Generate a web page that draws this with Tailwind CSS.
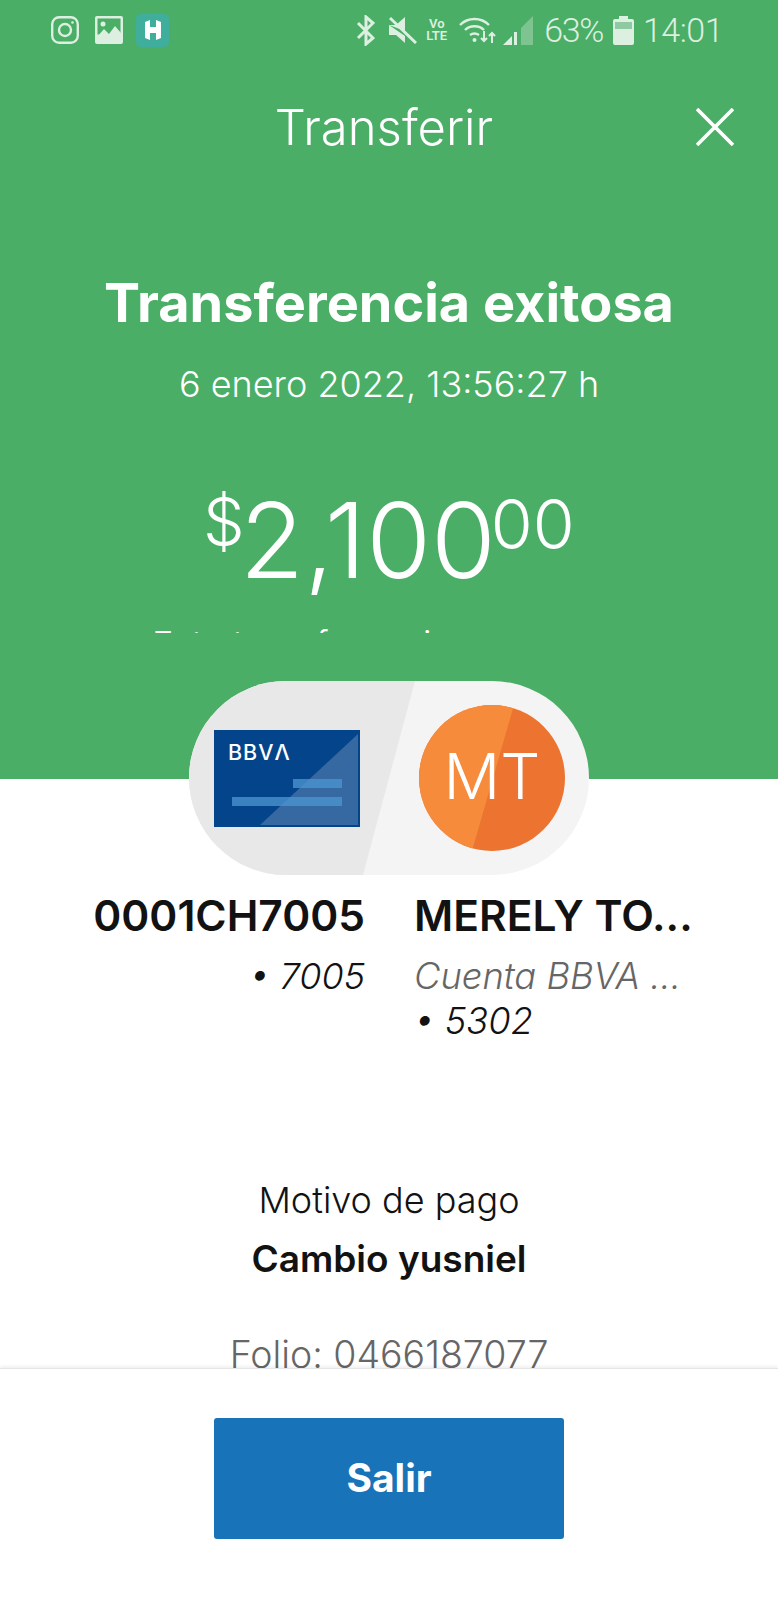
<!DOCTYPE html>
<html><head><meta charset="utf-8"><script src="https://cdn.jsdelivr.net/npm/@tailwindcss/browser@4"></script></head>
<body class="bg-white">
<div class="w-[778px] h-[1600px] flex flex-col overflow-hidden bg-white font-['Inter',sans-serif]">
 <main class="h-[1368px] overflow-hidden shrink-0">
  <section class="h-[779px] bg-[#4aae66]">
   <div class="h-[633px] overflow-hidden flex flex-col text-white text-center">
    <div class="h-[60px] shrink-0 flex items-center pl-[51px] pr-[55px] text-[#dcefe1]">
     <svg class="w-[28px] h-[28px]" viewBox="0 0 28 28" fill="none" stroke="#dcefe1" stroke-width="2.4"><rect x="1.2" y="1.2" width="25.6" height="25.6" rx="7"/><circle cx="14" cy="14" r="6"/><circle cx="21.5" cy="6.5" r="1.3" fill="#dcefe1" stroke="none"/></svg>
     <svg class="w-[28px] h-[28px] ml-[16px]" viewBox="0 0 28 28"><rect width="28" height="28" rx="2" fill="#dcefe1"/><rect x="2.5" y="2.5" width="23" height="16" fill="#4aae66"/><circle cx="8" cy="8" r="2.5" fill="#dcefe1"/><path d="M2 21l7-8 5 5 6-8 6 7v11H2z" fill="#dcefe1"/></svg>
     <div class="w-[33px] h-[33px] ml-[13px] rounded-[5px] bg-[#3fae9c] flex items-center justify-center">
      <svg class="w-[18px] h-[22px]" viewBox="0 0 18 22"><path d="M1 3l5-2v7h6V1l5 2v16l-5 2v-7H6v7l-5-2z" fill="#fff"/></svg>
     </div>
     <svg class="w-[19px] h-[31px] ml-auto" viewBox="0 0 19 31" fill="none" stroke="#dcefe1" stroke-width="3"><path d="M2 8l15 15-7 6V2l7 6L2 23"/></svg>
     <svg class="w-[28px] h-[28px] ml-[14px]" viewBox="0 0 28 28"><path d="M0 9h7l9-8v14zM0 9v10h7l9 8v-7z" fill="#dcefe1"/><path d="M1 2l26 25" stroke="#dcefe1" stroke-width="3"/></svg>
     <div class="w-[23px] ml-[8px] text-[13px] leading-[12px] font-semibold font-['Roboto',sans-serif]">Vo<br>LTE</div>
     <svg class="w-[37px] h-[29px] ml-[11px]" viewBox="0 0 37 29" fill="none" stroke="#dcefe1" stroke-width="2.4"><path d="M1 9c8-8 21-8 29 0M6 14c5-5 14-5 19 0M11 19c3-2 6-2 9 0"/><circle cx="15.500" cy="24" r="2" fill="#dcefe1" stroke="none"/><path d="M25 15v10m-3-3l3 3 3-3M33 27V17m-3 3l3-3 3 3" stroke-width="2"/></svg>
     <svg class="w-[30px] h-[29px] ml-[7px]" viewBox="0 0 30 29"><path d="M0 29l9-9v9z" fill="#dcefe1"/><rect x="11" y="16" width="3" height="13" fill="#dcefe1"/><path d="M18 12l12-12v29H18z" fill="#dcefe1" fill-opacity=".35"/></svg>
     <span class="ml-[11px] text-[34px] leading-none font-['Roboto',sans-serif] font-light tracking-[-1.4px]">63%</span>
     <svg class="w-[21px] h-[29px] ml-[10px]" viewBox="0 0 21 29"><path d="M6 0h9v3h4a2 2 0 012 2v22a2 2 0 01-2 2H2a2 2 0 01-2-2V5a2 2 0 012-2h4z" fill="#dcefe1"/><rect x="2" y="6" width="17" height="7" fill="#8fc9a2"/></svg>
     <span class="ml-[9px] text-[34px] leading-none font-['Roboto',sans-serif] font-light tracking-[-0.5px]">14:01</span>
    </div>
    <div class="relative h-[134px] shrink-0 flex items-center justify-center">
     <h1 class="text-[49px] font-light leading-none -ml-[10px]">Transferir</h1>
     <svg class="absolute right-[44px] top-[48px] w-[38px] h-[38px]" viewBox="0 0 38 38" stroke="#fff" stroke-width="3.600"><path d="M1 1l36 36M37 1L1 37"/></svg>
    </div>
    <h2 class="mt-[79px] text-[54px] leading-[60px] font-bold whitespace-nowrap">Transferencia exitosa</h2>
    <p class="mt-[29px] text-[36px] leading-[44px] font-light">6 enero 2022, 13:56:27 h</p>
    <div class="mt-[81px] h-[120px] flex justify-center items-start font-light leading-none">
     <span class="text-[66px] mt-[1px]">$</span><span class="text-[105px] -ml-[5px]">2,100</span><span class="text-[68px] mt-[3px] -ml-[5px]">00</span>
    </div>
    <p class="mt-[30px] pl-[152px] text-left text-[36px] leading-[44px] font-light">Esta transferencia</p>
   </div>
  </section>
  <section class="relative -mt-[98px] flex flex-col items-center text-[#121212]">
   <div class="relative w-[400px] h-[194px] rounded-full overflow-hidden bg-[#f4f4f4] flex items-center">
    <div class="absolute inset-0 bg-[#e8e8e8] [clip-path:polygon(0_0,226px_0,174px_100%,0_100%)]"></div>
    <svg class="relative ml-[25px] w-[146px] h-[97px]" viewBox="0 0 146 97" font-family="Inter"><rect width="146" height="97" fill="#04448a"/><path d="M144 4v91H46z" fill="#fff" fill-opacity=".2"/><rect x="18" y="67" width="110" height="9" fill="#4e97d3" fill-opacity=".75"/><rect x="79" y="49" width="49" height="9" fill="#4e97d3" fill-opacity=".75"/><text x="14" y="30" font-size="21.500" font-weight="500" fill="#fff" letter-spacing="1">BBVΛ</text></svg>
    <div class="relative ml-[59px] w-[146px] h-[146px] rounded-full overflow-hidden bg-[#ec7330] flex items-center justify-center">
     <div class="absolute inset-0 bg-[#f78b3c] [clip-path:polygon(0_0,95px_0,53px_100%,0_100%)]"></div>
     <span class="relative text-white text-[63px] font-light leading-none -mt-[3px]">MT</span>
    </div>
   </div>
   <div class="w-full flex gap-[49px] mt-[13px]">
    <div class="w-[365px] text-right">
     <div class="text-[42.500px] leading-[56px] font-semibold whitespace-nowrap">0001CH7005</div>
     <div class="mt-[10px] text-[36px] leading-[45px] italic font-light">• 7005</div>
    </div>
    <div class="w-[285px]">
     <div class="text-[42.500px] leading-[56px] font-semibold whitespace-nowrap">MERELY TO...</div>
     <div class="mt-[10px] text-[36.300px] leading-[45px] italic font-light"><span class="text-[#666]">Cuenta BBVA ...</span><br>• 5302</div>
    </div>
   </div>
   <p class="mt-[134px] text-[36px] leading-[44px] font-light">Motivo de pago</p>
   <p class="mt-[15px] text-[37px] leading-[44px] font-semibold">Cambio yusniel</p>
   <p class="mt-[52px] text-[37.500px] leading-[44px] font-light text-[#666]">Folio: 0466187077</p>
  </section>
 </main>
 <footer class="relative flex-1 bg-white border-t border-[#e6e6e6] shadow-[0_-2px_3px_rgba(0,0,0,0.06)] flex justify-center pt-[49px]">
  <button class="w-[350px] h-[121px] rounded-[3px] bg-[#1973b8] text-white text-[39px] font-bold">Salir</button>
 </footer>
</div>
</body></html>
